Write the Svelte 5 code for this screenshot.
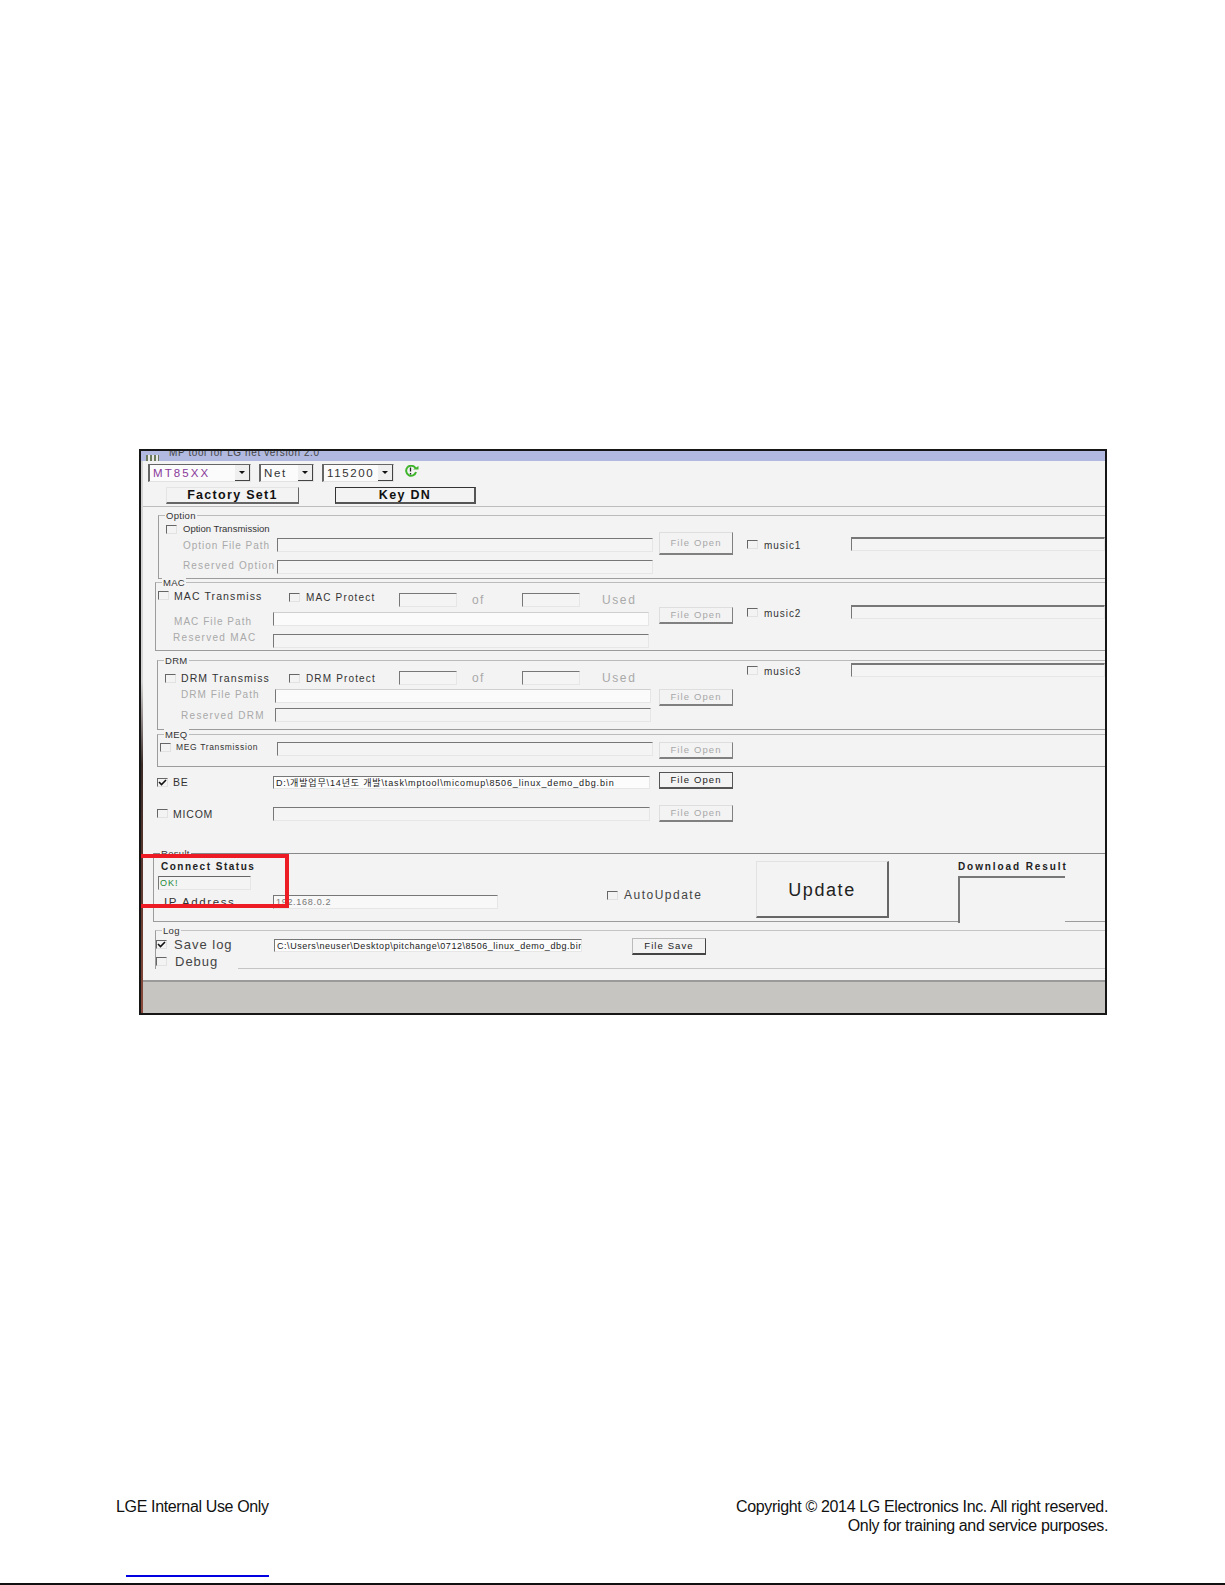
<script>
	const beFile = 'D:\\개발업무\\14년도 개발\\task\\mptool\\micomup\\8506_linux_demo_dbg.bin';
	const logFile = 'C:\\Users\\neuser\\Desktop\\pitchange\\0712\\8506_linux_demo_dbg.bin';
</script>

{#snippet check(on = false)}
	<span class="cb">
		{#if on}
			<svg viewBox="0 0 11 9" width="11" height="9"><path d="M2 4l2.5 2.5L9 2" fill="none" stroke="#111" stroke-width="1.6" /></svg>
		{/if}
	</span>
{/snippet}

{#snippet combo(text, width, cls = '')}
	<div class="combo" style="width:{width}px">
		<span class={cls}>{text}</span>
		<i class="drop"><b></b></i>
	</div>
{/snippet}

{#snippet open(cls = '', active = false)}
	<button class="fo {cls}" class:active>File Open</button>
{/snippet}

{#snippet music(name, cls)}
	<div class="music {cls}">
		{@render check()}
		<span class="mlabel">{name}</span>
		<div class="in mfield"></div>
	</div>
{/snippet}

{#snippet protect(name)}
	{@render check()}
	<span class="protect">{name}</span>
	<div class="in small first"></div>
	<span class="of">of</span>
	<div class="in small"></div>
	<span class="used">Used</span>
{/snippet}

<div class="page">
	<div class="frame">
		<div class="title">
			<i class="appicon"></i>
			<span>MP tool for LG net version 2.0</span>
		</div>

		<div class="panel">
			<div class="tools">
				{@render combo('MT85XX', 103, 'purple')}
				{@render combo('Net', 55)}
				{@render combo('115200', 72)}
				<svg class="run" viewBox="0 0 16 12" width="16" height="12">
					<path d="M12.5 3.2A5 5 0 1 0 13 7" fill="none" stroke="#3fb52c" stroke-width="2" />
					<path d="M10 4.6h5.5V1z" fill="#3fb52c" />
					<path d="M7.5 2.6v4M7.5 8v1.4" stroke="#222" stroke-width="1.3" />
				</svg>
			</div>

			<div class="keys">
				<button class="big">Factory Set1</button>
				<button class="big key">Key DN</button>
			</div>

			<div class="divider"></div>

			<section class="grp option">
				<span class="legend">Option</span>
				<div class="left">
					<div class="row r1">
						{@render check()}
						<span class="opt-t">Option Transmission</span>
					</div>
					<div class="row r2">
						<span class="lab">Option File Path</span>
						<div class="in grow"></div>
					</div>
					<div class="row r3">
						<span class="lab">Reserved Option</span>
						<div class="in grow"></div>
					</div>
				</div>
				{@render open('tall')}
				{@render music('music1', 'm1')}
			</section>

			<section class="grp mac">
				<span class="legend">MAC</span>
				<div class="left">
					<div class="row r1">
						{@render check()}
						<span class="trans">MAC Transmiss</span>
						{@render protect('MAC Protect')}
					</div>
					<div class="row r2">
						<span class="lab">MAC File Path</span>
						<div class="in grow pale"></div>
					</div>
					<div class="row r3">
						<span class="lab">Reserved MAC</span>
						<div class="in grow"></div>
					</div>
				</div>
				{@render open()}
				{@render music('music2', 'm2')}
			</section>

			<section class="grp drm">
				<span class="legend">DRM</span>
				<div class="left">
					<div class="row r1">
						{@render check()}
						<span class="trans">DRM Transmiss</span>
						{@render protect('DRM Protect')}
					</div>
					<div class="row r2">
						<span class="lab">DRM File Path</span>
						<div class="in grow pale"></div>
					</div>
					<div class="row r3">
						<span class="lab">Reserved DRM</span>
						<div class="in grow"></div>
					</div>
				</div>
				{@render open()}
				{@render music('music3', 'm3')}
			</section>

			<section class="grp meq">
				<span class="legend">MEQ</span>
				<div class="left">
					<div class="row">
						{@render check()}
						<span class="meg">MEG Transmission</span>
						<div class="in grow"></div>
					</div>
				</div>
				{@render open()}
			</section>

			<div class="line be">
				{@render check(true)}
				<span class="name">BE</span>
				<div class="in path white">{beFile}</div>
				{@render open('', true)}
			</div>

			<div class="line micom">
				{@render check()}
				<span class="name">MICOM</span>
				<div class="in path"></div>
				{@render open()}
			</div>

			<section class="grp result">
				<span class="legend">Result</span>
				<div class="status">
					<b class="bold">Connect Status</b>
					<div class="in ok">OK!</div>
					<div class="ip">
						<span class="iplab">IP Address</span>
						<div class="in ipval">192.168.0.2</div>
					</div>
				</div>
				<div class="auto">
					{@render check()}
					<span>AutoUpdate</span>
				</div>
				<button class="update">Update</button>
				<div class="dl">
					<b class="bold">Download Result</b>
					<div class="in dlbox"></div>
				</div>
			</section>

			<section class="grp log">
				<span class="legend">Log</span>
				<div class="logleft">
					<div class="logrow first">
						{@render check(true)}
						<span>Save log</span>
					</div>
					<div class="logrow">
						{@render check()}
						<span>Debug</span>
					</div>
				</div>
				<div class="in logpath white">{logFile}</div>
				<button class="fo save">File Save</button>
				<i class="logbottom"></i>
			</section>

			<div class="status-bar"></div>
		</div>

		<!-- red note box drawn over the shot -->
		<div class="note"></div>
	</div>

	<footer>
		<div class="foot-l">LGE Internal Use Only</div>
		<div class="foot-r">Copyright © 2014 LG Electronics Inc. All right reserved.<br />Only for training and service purposes.</div>
	</footer>

	<div class="link"></div>
	<div class="rule"></div>
</div>

<style>
	:global(body) {
		margin: 0;
		background: #fff;
	}

	.page {
		height: 1585px;
		overflow: hidden;
		padding-top: 449px;
		box-sizing: border-box;
		display: flex;
		flex-direction: column;
		font-family: 'Liberation Sans', 'Noto Sans CJK KR', sans-serif;
	}

	.frame {
		position: relative;
		margin-left: 139px;
		width: 968px;
		height: 566px;
		box-sizing: border-box;
		border: 2px solid #161616;
		display: flex;
		flex-direction: column;
		background: #f3f3f3;
		color: #222;
		font-size: 10px;
		letter-spacing: 0.9px;
		overflow: hidden;
	}

	.title {
		height: 10px;
		flex: none;
		background: #b1b9e0;
		display: flex;
		align-items: flex-end;
		overflow: hidden;
		color: #444;
		line-height: 10px;
		padding-left: 5px;
	}

	.title span {
		margin-left: 10px;
		margin-bottom: 3px;
		letter-spacing: 0.6px;
		white-space: nowrap;
	}

	.appicon {
		width: 13px;
		height: 6px;
		background: repeating-linear-gradient(90deg, #6c7a5e 0 2px, #e8e8e8 2px 4px);
		flex: none;
	}

	.panel {
		flex: 1;
		display: flex;
		flex-direction: column;
		border-left: 2px solid;
		border-image: linear-gradient(#d4d4d4 40%, #3a2a26 55%, #8a4a3a 100%) 1;
		min-height: 0;
	}

	button {
		font: inherit;
		letter-spacing: inherit;
		padding: 0;
		box-sizing: border-box;
		background: #f3f3f3;
		flex: none;
	}

	/* toolbar */
	.tools {
		display: flex;
		margin: 3px 0 0 5px;
		height: 18px;
		gap: 8px;
	}

	.combo {
		box-sizing: border-box;
		border: 1px solid #e2e2e2;
		border-top-color: #666;
		border-left: 2px solid #666;
		background: #fbfbfb;
		display: flex;
		align-items: center;
		justify-content: space-between;
		font-size: 11.5px;
		letter-spacing: 1.6px;
		padding-left: 3px;
		color: #333;
		flex: none;
	}

	.purple {
		color: #8a3a9a;
		letter-spacing: 2.1px;
	}

	.drop {
		width: 15px;
		height: 16px;
		background: #efefef;
		border-right: 1px solid #444;
		border-bottom: 1px solid #444;
		display: flex;
		align-items: center;
		justify-content: center;
		box-sizing: border-box;
	}

	.drop b {
		border: 3px solid transparent;
		border-top: 3px solid #111;
		border-bottom: 0;
	}

	.run {
		margin: 1px 0 0 1px;
	}

	.keys {
		display: flex;
		margin: 5px 0 0 23px;
		gap: 36px;
	}

	.big {
		width: 133px;
		height: 17px;
		font-weight: bold;
		font-size: 12.5px;
		letter-spacing: 1.3px;
		color: #111;
		line-height: 13px;
		border: 1px solid #e4e4e4;
		border-right: 1px solid #666;
		border-bottom: 2px solid #666;
	}

	.key {
		width: 141px;
		border: 1px solid #333;
		border-bottom: 2px solid #555;
		border-right: 2px solid #555;
	}

	.divider {
		height: 1px;
		background: #bdbdbd;
		margin-top: 2px;
		flex: none;
	}

	/* group boxes */
	.grp {
		position: relative;
		box-sizing: border-box;
		border: 1px solid #9c9c9c;
		border-top-color: #bbb;
		border-right: 0;
		display: flex;
		align-items: flex-start;
		flex: none;
	}

	.legend {
		position: absolute;
		top: -6px;
		left: 6px;
		background: #f3f3f3;
		line-height: 11px;
		font-size: 9.5px;
		letter-spacing: 0.3px;
		padding: 0 1px;
		color: #333;
	}

	.left {
		flex: none;
		display: flex;
		flex-direction: column;
	}

	.row {
		display: flex;
		align-items: center;
	}

	.cb {
		width: 11px;
		height: 9px;
		box-sizing: border-box;
		border: 1px solid #e2e2e2;
		border-top-color: #666;
		border-left-color: #666;
		flex: none;
		display: block;
		line-height: 0;
		position: relative;
	}

	.cb svg {
		position: absolute;
		left: -1px;
		top: -1px;
	}

	.in {
		box-sizing: border-box;
		height: 14px;
		border: 1px solid #e6e6e6;
		border-top: 1px solid #777;
		border-left: 1px solid #777;
		background: #f4f4f4;
		overflow: hidden;
		white-space: nowrap;
		flex: none;
	}

	.grow {
		flex: 1;
	}

	.pale {
		background: #fbfbfb;
		border-top-color: #cfcfcf;
	}

	.white {
		background: #fcfcfc;
		color: #222;
	}

	.lab {
		color: #a9a9a9;
		white-space: nowrap;
		flex: none;
		letter-spacing: 1.05px;
	}

	.r3 .lab {
		letter-spacing: 1.3px;
	}

	.fo {
		width: 74px;
		height: 17px;
		margin-left: 6px;
		font-size: 9.5px;
		letter-spacing: 1.1px;
		color: #a8a8a8;
		border: 1px solid #dedede;
		border-right: 1px solid #808080;
		border-bottom: 2px solid #808080;
		line-height: 12px;
	}

	.fo.tall {
		height: 23px;
	}

	.fo.active {
		color: #222;
		border: 1px solid #555;
		border-bottom: 2px solid #555;
		border-right: 1px solid #555;
	}

	.music {
		display: flex;
		align-items: flex-start;
		flex: 1;
		margin-left: 14px;
	}

	.mlabel {
		width: 87px;
		flex: none;
		margin-left: 6px;
		margin-top: 3px;
		line-height: 12px;
		color: #333;
		font-size: 10px;
		letter-spacing: 0.95px;
	}

	.mfield {
		flex: 1;
		border-top: 2px solid #777;
	}

	.music .cb {
		margin-top: 3px;
	}

	.opt-t {
		margin-left: 6px;
		font-size: 9.5px;
		letter-spacing: 0;
		white-space: nowrap;
		color: #333;
		margin-top: -2px;
	}

	.option {
		margin: 8px 0 0 15px;
		height: 64px;
		padding-left: 7px;
	}

	.option .left {
		width: 487px;
		margin-top: 9px;
	}

	.option .r1 {
		height: 9px;
	}

	.option .r2 {
		margin-top: 4px;
	}

	.option .r3 {
		margin-top: 8px;
	}

	.option .lab {
		width: 111px;
		padding-left: 17px;
		box-sizing: border-box;
		letter-spacing: 0.95px;
	}

	.option .r3 .lab {
		margin-top: -4px;
		letter-spacing: 1.15px;
	}

	.option .fo {
		margin-top: 16px;
	}

	.option .music {
		margin-top: 21px;
	}

	.trans {
		margin-left: 5px;
		width: 115px;
		flex: none;
		font-size: 10.5px;
		letter-spacing: 1.1px;
		white-space: nowrap;
		color: #333;
	}

	.protect {
		margin-left: 6px;
		width: 93px;
		flex: none;
		white-space: nowrap;
		color: #333;
		font-size: 10px;
		letter-spacing: 1.15px;
	}

	.small {
		width: 58px;
	}

	.of {
		width: 65px;
		flex: none;
		text-align: left;
		padding-left: 15px;
		box-sizing: border-box;
		color: #a9a9a9;
		font-size: 12px;
		letter-spacing: 1.4px;
	}

	.used {
		margin-left: 22px;
		color: #a9a9a9;
		font-size: 12px;
		letter-spacing: 1.6px;
	}

	.mac {
		margin: 3px 0 0 12px;
		height: 69px;
		padding-left: 2px;
	}

	.mac .left {
		width: 491px;
		margin-top: 10px;
	}

	.mac .r1 {
		height: 14px;
	}

	.mac .r1 > .cb,
	.mac .protect {
		margin-bottom: 5px;
	}

	.mac .r1 > .cb:first-child,
	.mac .trans {
		margin-bottom: 9px;
	}

	.mac .r2 {
		margin-top: 5px;
	}

	.mac .r3 {
		margin-top: 8px;
	}

	.mac .lab {
		width: 115px;
		padding-left: 16px;
		box-sizing: border-box;
	}

	.mac .r2 .lab {
		margin-bottom: -4px;
	}

	.mac .r3 .lab {
		margin-top: -8px;
		padding-left: 15px;
	}

	.mac .fo {
		margin: 24px 0 0 10px;
	}

	.mac .music {
		margin-top: 22px;
	}

	.drm {
		margin: 9px 0 0 14px;
		height: 70px;
		padding-left: 7px;
	}

	.drm .left {
		width: 486px;
		margin-top: 10px;
	}

	.drm .r1 {
		height: 14px;
	}

	.drm .trans {
		width: 108px;
	}

	.drm .protect {
		width: 93px;
	}

	.drm .r2 {
		margin-top: 4px;
	}

	.drm .r3 {
		margin-top: 5px;
	}

	.drm .lab {
		width: 110px;
		padding-left: 16px;
		box-sizing: border-box;
	}

	.drm .r2 .lab {
		margin-top: -4px;
	}

	.drm .fo {
		margin: 28px 0 0 8px;
	}

	.drm .music {
		margin-top: 2px;
	}

	.meq {
		margin: 4px 0 0 14px;
		height: 33px;
		padding-left: 2px;
	}

	.meq .left {
		width: 493px;
		margin-top: 7px;
	}

	.meq .cb,
	.meg {
		margin-bottom: 4px;
	}

	.meg {
		margin-left: 5px;
		width: 101px;
		flex: none;
		font-size: 8.5px;
		letter-spacing: 0.65px;
		white-space: nowrap;
		color: #333;
	}

	.meq .fo {
		margin: 7px 0 0 6px;
	}

	/* loose rows */
	.line {
		display: flex;
		align-items: center;
		height: 17px;
		margin-left: 14px;
		flex: none;
	}

	.be {
		margin-top: 5px;
	}

	.be .cb {
		margin-top: 4px;
	}

	.be .name {
		margin-top: 2px;
	}

	.be .path {
		height: 13px;
		margin-top: 4px;
	}

	.micom {
		margin-top: 16px;
	}

	.name {
		margin-left: 5px;
		width: 100px;
		flex: none;
		font-size: 10.5px;
		letter-spacing: 0.8px;
		color: #333;
	}

	.path {
		width: 377px;
		margin-right: 3px;
		font-size: 9px;
		letter-spacing: 0.85px;
		line-height: 12px;
		padding-left: 2px;
	}

	.be .fo {
		margin-left: 6px;
	}

	/* result */
	.result {
		margin: 31px 0 0 10px;
		height: 69px;
		border-top-color: #888;
	}

	.bold {
		font-size: 10px;
		letter-spacing: 1.5px;
		line-height: 12px;
		color: #222;
		white-space: nowrap;
		display: block;
	}

	.dl .bold {
		letter-spacing: 1.9px;
	}

	.status {
		width: 345px;
		flex: none;
		padding: 7px 0 0 2px;
		box-sizing: border-box;
	}

	.status .bold {
		margin-left: 5px;
	}

	.ok {
		width: 93px;
		margin: 3px 0 0 2px;
		color: #1d8a3a;
		font-size: 9px;
		line-height: 12px;
		padding-left: 1px;
		border-top: 1px solid #666;
		letter-spacing: 1px;
	}

	.ip {
		display: flex;
		align-items: center;
		margin-top: 5px;
	}

	.iplab {
		width: 117px;
		padding-left: 8px;
		box-sizing: border-box;
		font-size: 11.5px;
		letter-spacing: 1.6px;
		flex: none;
		color: #333;
	}

	.ipval {
		width: 225px;
		color: #777;
		font-size: 9px;
		letter-spacing: 0.7px;
		line-height: 12px;
		padding-left: 2px;
		background: #f8f8f8;
	}

	.auto {
		margin: 34px 0 0 102px;
		width: 155px;
		flex: none;
		display: flex;
		align-items: center;
		font-size: 12px;
		letter-spacing: 1.5px;
		color: #444;
		white-space: nowrap;
	}

	.auto span {
		margin-left: 6px;
	}

	.update {
		width: 133px;
		height: 57px;
		margin-top: 7px;
		font-size: 18px;
		letter-spacing: 1.6px;
		color: #222;
		border: 1px solid #e2e2e2;
		border-right: 2px solid #666;
		border-bottom: 2px solid #666;
		padding-top: 2px;
	}

	.dl {
		margin: 7px 0 -3px 69px;
		width: 107px;
		flex: none;
		position: relative;
	}

	.dlbox {
		width: 107px;
		height: 47px;
		margin-top: 3px;
		background: #f3f3f3;
		border-top: 2px solid #777;
		border-left: 2px solid #777;
		border-right: 0;
		border-bottom: 0;
	}

	/* log */
	.log {
		margin: 8px 0 0 12px;
		height: 39px;
		border-bottom: 0;
		border-top-color: #c4c4c4;
	}

	.logbottom {
		position: absolute;
		left: 82px;
		right: 0;
		bottom: 0;
		height: 1px;
		background: #c4c4c4;
	}

	.logleft {
		width: 118px;
		flex: none;
		padding-top: 9px;
		font-size: 13px;
		letter-spacing: 1px;
		color: #444;
	}

	.logrow {
		display: flex;
		align-items: center;
		height: 9px;
		gap: 8px;
		margin-bottom: 8px;
	}

	.logrow.first {
		gap: 7px;
	}

	.logpath {
		width: 308px;
		height: 13px;
		margin-top: 8px;
		font-size: 9px;
		letter-spacing: 0.55px;
		line-height: 12px;
		padding-left: 2px;
	}

	.save {
		margin: 7px 0 0 50px;
		color: #222;
		border: 1px solid #bbb;
		border-right: 1px solid #444;
		border-bottom: 2px solid #444;
	}

	.status-bar {
		flex: 1;
		margin-top: 11px;
		background: #c6c5c2;
		border-top: 2px solid #9a9a9a;
	}

	.note {
		position: absolute;
		left: 0;
		top: 403px;
		width: 144px;
		height: 46px;
		border: 4px solid #ed1c24;
		border-left: 0;
	}

	footer {
		display: flex;
		justify-content: space-between;
		align-items: flex-start;
		margin: 482px 117px 0 116px;
		font-size: 16px;
		line-height: 19px;
		color: #111;
		letter-spacing: -0.35px;
		flex: none;
	}

	.foot-r {
		text-align: right;
	}

	.link {
		width: 143px;
		height: 2px;
		background: #0000e0;
		margin: 40px 0 0 126px;
		flex: none;
	}

	.rule {
		height: 2px;
		background: #111;
		margin-top: 6px;
		flex: none;
	}
</style>
